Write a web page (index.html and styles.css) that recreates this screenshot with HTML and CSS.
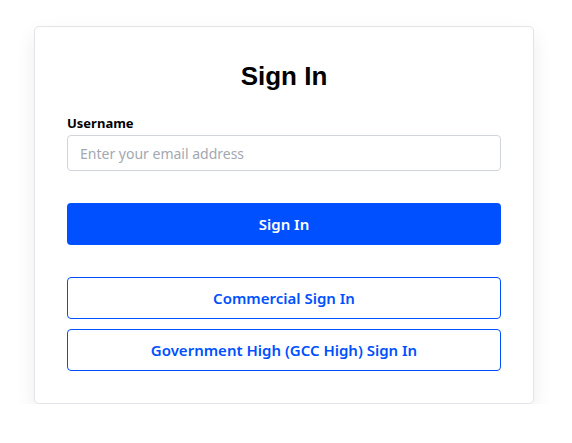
FILE: index.html
```html
<!DOCTYPE html>
<html lang="en">
<head>
<meta charset="utf-8">
<title>Sign In</title>
<link rel="stylesheet" href="styles.css">
</head>
<body>
<main class="page">
  <section class="card">
    <h1 class="title">Sign In</h1>
    <form class="form">
      <label class="label" for="username">Username</label>
      <input class="input" id="username" type="text" placeholder="Enter your email address">
      <button class="btn btn-primary" type="button">Sign In</button>
      <div class="alt">
        <button class="btn btn-outline" type="button">Commercial Sign In</button>
        <button class="btn btn-outline" type="button">Government High (GCC High) Sign In</button>
      </div>
    </form>
  </section>
</main>
</body>
</html>
```
FILE: styles.css
```css
html, body {
  margin: 0;
  padding: 0;
  background: #ffffff;
}
body {
  font-family: "Noto Sans", "Open Sans", "Liberation Sans", sans-serif;
  color: #111;
}
.page {
  display: flex;
  padding: 26px 0 0 34px;
}
.card {
  width: 500px;
  box-sizing: border-box;
  border: 1px solid #e3e4e8;
  border-radius: 5px;
  background: #fff;
  padding: 32px;
  box-shadow: 0 8px 20px rgba(0, 0, 0, 0.08);
}
.title {
  margin: 0 0 20px;
  font-family: "Liberation Sans", Arial, sans-serif;
  font-size: 26px;
  line-height: 34px;
  font-weight: 700;
  text-align: center;
  color: #000;
}
.form {
  display: flex;
  flex-direction: column;
}
.label {
  font-size: 13px;
  line-height: 20px;
  font-weight: 700;
  color: #000;
  margin-bottom: 2px;
}
.input {
  height: 36px;
  box-sizing: border-box;
  border: 1px solid #d1d5db;
  border-radius: 4px;
  padding: 0 12px;
  font-family: inherit;
  font-size: 14px;
  color: #111;
  outline: none;
}
.input::placeholder {
  color: #a3a8b0;
}
.btn {
  height: 42px;
  box-sizing: border-box;
  border-radius: 4px;
  font-family: inherit;
  font-size: 15px;
  font-weight: 600;
  cursor: pointer;
}
.btn-primary {
  margin-top: 32px;
  border: none;
  background: #0050ff;
  color: #fff;
}
.alt {
  margin-top: 32px;
  display: flex;
  flex-direction: column;
  gap: 10px;
}
.btn-outline {
  border: 1px solid #0050ff;
  background: #fff;
  color: #0050ff;
}
```
